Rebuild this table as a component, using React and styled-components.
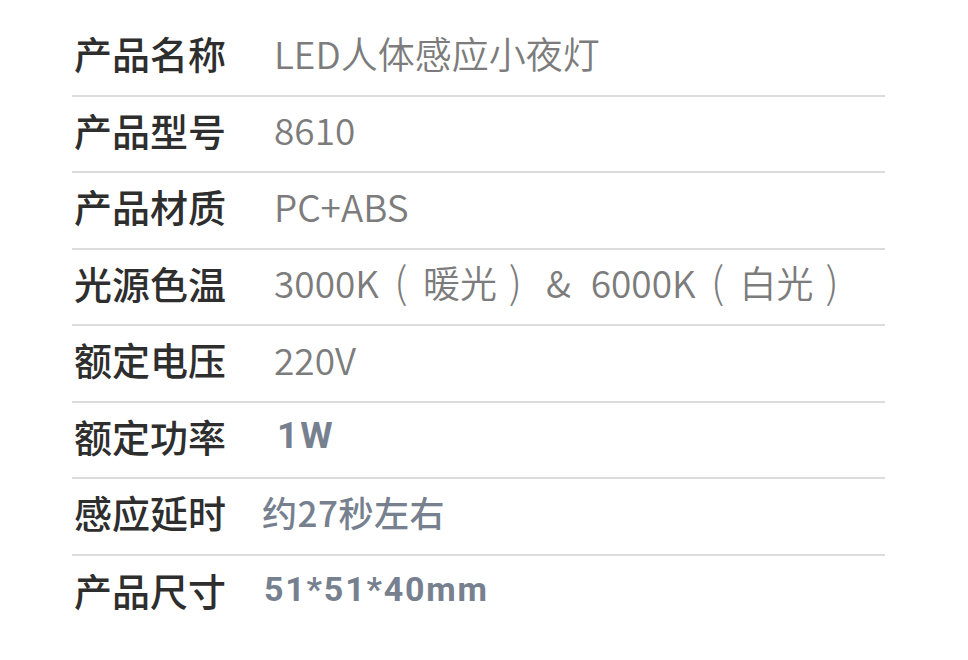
import React from "react";
import styled, { createGlobalStyle } from "styled-components";

const GlobalStyle = createGlobalStyle`
  html, body {
    margin: 0;
    padding: 0;
    background: #ffffff;
  }
  body {
    font-family: "Noto Sans CJK SC", "Noto Sans", sans-serif;
  }
`;

const Page = styled.div`
  width: 968px;
  height: 660px;
  box-sizing: border-box;
  padding: 20px 0 0 72px;
  background: #ffffff;
`;

const SpecTable = styled.div`
  width: 813px;
  display: flex;
  flex-direction: column;
`;

const Row = styled.div`
  display: flex;
  align-items: center;
  height: 76.5px;
  box-sizing: border-box;
  padding-bottom: 9px;
  border-bottom: ${(p) => (p.$last ? "none" : "2px solid #dcdcdc")};
`;

const Label = styled.div`
  width: 200px;
  padding-left: 2px;
  flex-shrink: 0;
  font-size: 38px;
  font-weight: 500;
  color: #2e2e2e;
  white-space: nowrap;
`;

const Value = styled.div`
  font-size: 37px;
  font-weight: 350;
  color: #7c7c7c;
  white-space: nowrap;
`;

const TintValue = styled.div`
  white-space: nowrap;
  color: #76808f;
  font-size: ${(p) => p.$size}px;
  font-weight: ${(p) => p.$weight};
  letter-spacing: ${(p) => p.$spacing || 0}px;
  margin-left: ${(p) => p.$shift || 0}px;
  font-family: ${(p) =>
    p.$latin
      ? 'Roboto, "Noto Sans CJK SC", sans-serif'
      : '"Noto Sans CJK SC", "Noto Sans", sans-serif'};
`;

const Paren = styled.span`
  display: inline-block;
  width: ${(p) => (p.$open ? "44px" : "37px")};
  margin-right: ${(p) => (p.$open ? 0 : 12)}px;
  text-align: center;
  font-size: 42px;
  line-height: 1;
  font-weight: 300;
`;

const Amp = styled.span`
  display: inline-block;
  margin-right: 20px;
`;

const Temperature = () => (
  <>
    3000K<Paren $open>(</Paren>暖光<Paren>)</Paren>
    <Amp>&amp;</Amp>6000K<Paren $open>(</Paren>白光<Paren>)</Paren>
  </>
);

const specs = [
  { label: "产品名称", value: "LED人体感应小夜灯" },
  { label: "产品型号", value: "8610" },
  { label: "产品材质", value: "PC+ABS" },
  { label: "光源色温", value: <Temperature /> },
  { label: "额定电压", value: "220V" },
  {
    label: "额定功率",
    value: "1W",
    tint: { $size: 37, $weight: 700, $spacing: 2, $shift: 3, $latin: true },
  },
  {
    label: "感应延时",
    value: "约27秒左右",
    tint: { $size: 35, $weight: 500, $spacing: 0.5, $shift: -12 },
  },
  {
    label: "产品尺寸",
    value: "51*51*40mm",
    tint: { $size: 34, $weight: 700, $spacing: 1.8, $shift: -10, $latin: true },
  },
];

const App = () => {
  return (
    <Page>
      <GlobalStyle />
      <SpecTable>
        {specs.map((s, i) => (
          <Row key={s.label} $last={i === specs.length - 1}>
            <Label>{s.label}</Label>
            {s.tint ? (
              <TintValue {...s.tint}>{s.value}</TintValue>
            ) : (
              <Value>{s.value}</Value>
            )}
          </Row>
        ))}
      </SpecTable>
    </Page>
  );
};

export default App;
